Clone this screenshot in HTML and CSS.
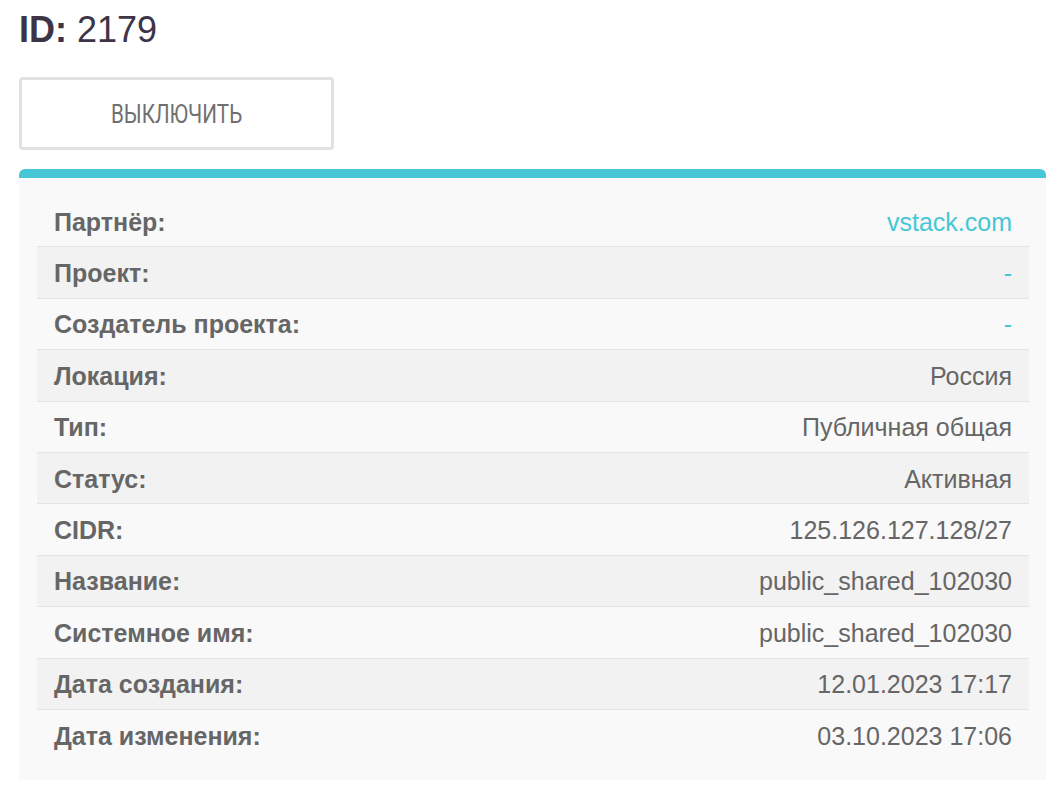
FILE: index.html
```html
<!DOCTYPE html>
<html lang="ru">

<head>
    <meta charset="UTF-8">
    <meta name="viewport" content="width=device-width, initial-scale=1.0">
    <title>ID: 2179</title>
    <link rel="stylesheet" href="styles.css">
</head>

<body>
    <div id="page">
        <h1 class="title"><b>ID:</b> 2179</h1>

        <a class="btn" href="javascript:;"><span>ВЫКЛЮЧИТЬ</span></a>

        <div class="panel">
            <div class="row">
                <span class="label">Партнёр:</span>
                <a class="value link" href="javascript:;">vstack.com</a>
            </div>
            <div class="row">
                <span class="label">Проект:</span>
                <a class="value link" href="javascript:;">-</a>
            </div>
            <div class="row">
                <span class="label">Создатель проекта:</span>
                <a class="value link" href="javascript:;">-</a>
            </div>
            <div class="row">
                <span class="label">Локация:</span>
                <span class="value">Россия</span>
            </div>
            <div class="row">
                <span class="label">Тип:</span>
                <span class="value">Публичная общая</span>
            </div>
            <div class="row">
                <span class="label">Статус:</span>
                <span class="value">Активная</span>
            </div>
            <div class="row">
                <span class="label">CIDR:</span>
                <span class="value">125.126.127.128/27</span>
            </div>
            <div class="row">
                <span class="label">Название:</span>
                <span class="value">public_shared_102030</span>
            </div>
            <div class="row">
                <span class="label">Системное имя:</span>
                <span class="value">public_shared_102030</span>
            </div>
            <div class="row">
                <span class="label">Дата создания:</span>
                <span class="value">12.01.2023 17:17</span>
            </div>
            <div class="row">
                <span class="label">Дата изменения:</span>
                <span class="value">03.10.2023 17:06</span>
            </div>
        </div>
    </div>
</body>

</html>
```

FILE: styles.css
```css
body {
    margin: 0;
    background: #fff;
    font-family: "Liberation Sans", Arial, sans-serif;
}

#page {
    padding: 12px 11px 0 19px;
}

.title {
    margin: 0;
    font-size: 36px;
    line-height: 36px;
    font-weight: 400;
    color: #3d3446;
}

.title b {
    font-weight: 700;
}

.btn {
    display: flex;
    align-items: center;
    justify-content: center;
    box-sizing: border-box;
    width: 315px;
    height: 73px;
    margin-top: 29px;
    border: 3px solid #e2e2e2;
    border-radius: 4px;
    text-decoration: none;
}

.btn span {
    display: inline-block;
    font-family: Roboto, sans-serif;
    font-size: 26px;
    color: #707070;
    transform: scaleX(0.795);
}

.panel {
    margin-top: 19px;
    padding: 18px 17px 19px 18px;
    background: #f9f9f9;
    border-top: 9px solid #45c7d6;
    border-radius: 6px 6px 0 0;
}

.row {
    display: flex;
    justify-content: space-between;
    align-items: center;
    box-sizing: border-box;
    height: 51.4px;
    padding: 2px 17px 0;
    border-bottom: 1px solid #e4e4e4;
    font-size: 25px;
    color: #666;
}

.row:nth-child(even) {
    background: #f2f2f2;
}

.row:last-child {
    border-bottom: 0;
}

.label {
    font-weight: 700;
}

.value {
    color: #666;
    text-decoration: none;
}

.value.link {
    color: #45c7d6;
}
```
